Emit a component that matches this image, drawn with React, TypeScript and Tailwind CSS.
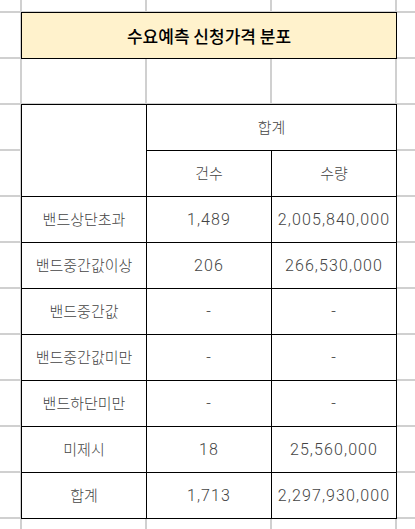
import React from "react";

const rows: [string, string, string][] = [
  ["밴드상단초과", "1,489", "2,005,840,000"],
  ["밴드중간값이상", "206", "266,530,000"],
  ["밴드중간값", "-", "-"],
  ["밴드중간값미만", "-", "-"],
  ["밴드하단미만", "-", "-"],
  ["미제시", "18", "25,560,000"],
  ["합계", "1,713", "2,297,930,000"],
];

const cell =
  "bg-white h-[45px] flex items-center justify-center text-[15px] font-light text-[#444] whitespace-nowrap";
const num =
  "bg-white h-[45px] flex items-center justify-center text-[16px] font-light text-[#444] whitespace-nowrap tracking-[1.1px] font-['Roboto',sans-serif]";

export default function App() {
  return (
    <div
      className="w-[415px] h-[529px] overflow-hidden bg-white pl-[21px] pt-[12px] bg-[linear-gradient(to_right,#d0d0d0_2px,transparent_2px),linear-gradient(to_bottom,#d0d0d0_2px,transparent_2px)] bg-size-[125px_46px] bg-position-[20px_11px]"
      style={{ fontFamily: '"Noto Sans CJK KR", "Noto Sans", sans-serif' }}
    >
      <div className="w-[376px] h-[47px] border border-black bg-[#fff2cc] flex items-center justify-center text-[17px] font-medium text-black">
        수요예측 신청가격 분포
      </div>
      <div className="h-[45px]" />
      <div className="w-[376px] grid grid-cols-[124px_124px_124px] gap-px bg-black border border-black">
        <div className="bg-white row-span-2" />
        <div className={`${cell} col-span-2`}>합계</div>
        <div className={cell}>건수</div>
        <div className={cell}>수량</div>
        {rows.map(([a, b, c]) => (
          <React.Fragment key={a}>
            <div className={cell}>{a}</div>
            <div className={num}>{b}</div>
            <div className={num}>{c}</div>
          </React.Fragment>
        ))}
      </div>
    </div>
  );
}
